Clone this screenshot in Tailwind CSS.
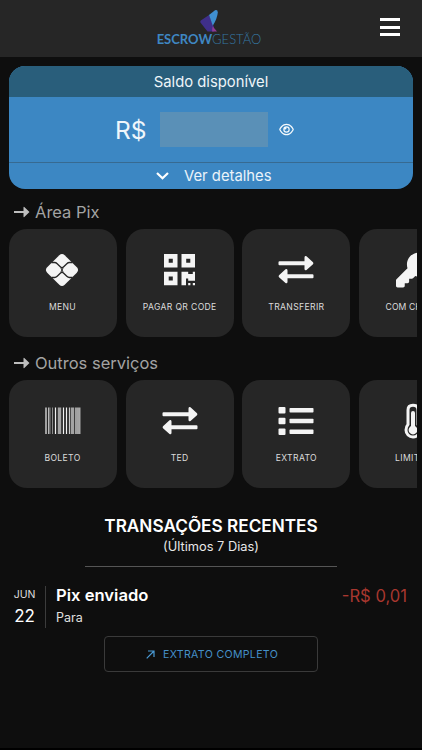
<!DOCTYPE html>
<html lang="pt-BR">
<head>
  <meta charset="UTF-8" />
  <meta name="viewport" content="width=device-width, initial-scale=1" />
  <title>Escrow Gestão</title>
  <script src="https://cdn.jsdelivr.net/npm/@tailwindcss/browser@4"></script>
</head>
<body class="bg-[#0e0e0e] h-[750px] border-b-2 border-black overflow-hidden font-['Inter',sans-serif] text-white">

  <header class="h-[57px] bg-[#262626] grid grid-cols-[1fr_auto_1fr] pr-[22px]">
    <div class="col-start-2 flex flex-col items-center pt-[9px] pl-[18px]">
      <svg class="w-[18px] h-[23px]" viewBox="0 0 18 23">
        <path d="M9 6 0.8 11.5Q-0.3 13 1 14.3L7.5 22.5H14L14 18Z" fill="#3f2f8a" />
        <path d="M9 6 15 1.2Q17.8 0.4 17.8 3.4 17.4 9 12.8 16.8Z" fill="#3f8fd0" />
        <path d="M12.6 17.2 17 22.5H12Z" fill="#8e3a94" />
      </svg>
      <div class="font-['Lato',sans-serif] text-[13px] leading-[17px] -mt-[1px] whitespace-nowrap"><span class="font-bold text-[#3f87c2]">ESCROW</span><span class="font-light text-[#3577a3]">GESTÃO</span></div>
    </div>
    <button class="justify-self-end self-start mt-[18px] w-[20px] h-[18px] flex flex-col justify-between" aria-label="Menu">
      <span class="block w-full h-[3px] bg-white"></span>
      <span class="block w-full h-[3px] bg-white"></span>
      <span class="block w-full h-[3px] bg-white"></span>
    </button>
  </header>

  <main>
    <!-- Saldo -->
    <section class="mt-[9px] mx-[9px] h-[123px] rounded-[16px] overflow-hidden bg-[#3c87c3]">
      <h2 class="h-[31px] pt-[1px] bg-[#295e7b] text-center text-[14.800px] leading-[31px] text-[#eef5f9]">Saldo disponível</h2>
      <div class="h-[65px] flex items-center pl-[106px]">
        <span class="w-[45px] pt-[1px] text-[24.500px] text-[#eff6fb]">R$</span>
        <span class="w-[108px] h-[35px] bg-[#5a90b7]"></span>
        <svg class="ml-[11px] w-[15px] h-[13px]" viewBox="0 0 576 512" fill="#f4f9fc"><path d="M288 80c-65.200 0-118.800 29.600-159.900 67.700C89.600 183.500 63 226 49.400 256c13.600 30 40.200 72.500 78.600 108.300C169.200 402.400 222.800 432 288 432s118.800-29.600 159.900-67.700C486.400 328.500 513 286 526.600 256c-13.600-30-40.200-72.500-78.600-108.300C406.800 109.600 353.200 80 288 80zM95.400 112.600C142.500 68.800 207.200 32 288 32s145.500 36.800 192.600 80.600c46.800 43.500 78.100 95.400 93 131.100 3.300 7.900 3.300 16.700 0 24.600-14.900 35.700-46.200 87.700-93 131.100C433.500 443.200 368.800 480 288 480s-145.500-36.800-192.600-80.600C48.600 356 17.300 304 2.500 268.300c-3.300-7.900-3.300-16.700 0-24.600C17.300 208 48.600 156 95.400 112.600zM288 336c44.200 0 80-35.800 80-80s-35.800-80-80-80c-.7 0-1.300 0-2 0 1.300 5.100 2 10.500 2 16 0 35.300-28.700 64-64 64-5.500 0-10.900-.7-16-2 0 .7 0 1.300 0 2 0 44.200 35.800 80 80 80zm0-208a128 128 0 1 1 0 256 128 128 0 1 1 0-256z" /></svg>
      </div>
      <button class="w-full h-[27px] border-t border-[#376a91] flex items-center pl-[147px] text-[14.800px] text-[#eaf3fa]">
        <svg class="w-[13px] h-[8px] mr-[15px]" viewBox="0 0 13 8" fill="none" stroke="#fff" stroke-width="2.200"><path d="M1 1 6.500 6.300 12 1" /></svg>
        Ver detalhes
      </button>
    </section>

    <!-- Área Pix -->
    <section class="mt-[12px]">
      <h2 class="h-[22px] ml-[14px] flex items-center text-[16.500px] text-[#a3a3a3]">
        <svg class="w-[16px] h-[12px] mr-[5px]" viewBox="0 0 16 12" fill="#bdbdbd"><path d="M0 5H9.500V1.200Q9.700 0.500 10.300 1L15.500 6 10.300 11Q9.700 11.500 9.500 10.800V7H0Z" /></svg>
        Área Pix
      </h2>
      <div class="mt-[6px] ml-[9px] mr-[5px] flex gap-[8.7px] overflow-hidden text-[8.600px] leading-[16px] tracking-[0.35px] text-[#dcdcdc]">
        <div class="shrink-0 size-[108px] rounded-[18px] bg-[#262626] flex flex-col items-center pt-[23px]">
          <svg class="size-[36px] mr-[2px]" viewBox="0 0 36 36">
            <path d="M15.300 3.200Q18 .6 20.700 3.200L32.800 15.300Q35.400 18 32.800 20.700L20.700 32.800Q18 35.400 15.300 32.800L3.200 20.700Q.6 18 3.200 15.300Z" fill="#f4f4f4" />
            <path d="M7.500 10.500H10.500Q12 10.500 13.200 11.700L16.300 14.800Q18 16.500 19.700 14.800L22.800 11.700Q24 10.500 25.500 10.500H28.500M7.500 25.500H10.500Q12 25.500 13.200 24.300L16.300 21.200Q18 19.500 19.700 21.200L22.800 24.300Q24 25.500 25.500 25.500H28.500" fill="none" stroke="#262626" stroke-width="1.300" />
            <path d="M16.800 15.800 19.200 20.200M19.200 15.800 16.800 20.200" stroke="#262626" stroke-width="1" />
          </svg>
          <span class="mt-[11px] mr-[1px]">MENU</span>
        </div>
        <div class="shrink-0 size-[108px] rounded-[18px] bg-[#262626] flex flex-col items-center pt-[23px]">
          <svg class="w-[31px] h-[36px]" viewBox="0 0 31 36" fill="#f4f4f4">
            <path fill-rule="evenodd" d="M0 2H13.500V15.500H0ZM4.700 6.700V10.800H8.800V6.700ZM17.500 2H31V15.500H17.500ZM22.200 6.700V10.800H26.300V6.700ZM0 19.700H13.500V33.200H0ZM4.700 24.400V28.500H8.800V24.400Z" />
            <path d="M17.500 19.700H24.200V22H28.800V19.700H31V28.700H24.200V26.500H22V33.200H17.500ZM24.200 31H26.400V33.200H24.200ZM28.800 31H31V33.200H28.800Z" />
          </svg>
          <span class="mt-[11px]">PAGAR QR CODE</span>
        </div>
        <div class="shrink-0 size-[108px] rounded-[18px] bg-[#262626] flex flex-col items-center pt-[23px]">
          <svg class="size-[36px]" viewBox="0 0 36 36" fill="#f4f4f4">
            <path d="M1.500 9.200H26.500V5.500Q26.700 3.500 28.500 4.300L35 10.200Q35.800 11.200 35 12.200L28.500 18.100Q26.700 18.900 26.500 16.900V13.300H1.500Q.5 13.300.5 12.300V10.200Q.5 9.200 1.500 9.200Z" />
            <path d="M34.500 22.200H9.500V18.500Q9.300 16.500 7.500 17.300L1 23.200Q.2 24.200 1 25.200L7.500 31.100Q9.300 31.900 9.500 29.900V26.300H34.500Q35.500 26.300 35.500 25.300V23.200Q35.500 22.200 34.500 22.200Z" />
          </svg>
          <span class="mt-[11px]">TRANSFERIR</span>
        </div>
        <div class="shrink-0 size-[108px] rounded-[18px] bg-[#262626] flex flex-col items-center pt-[23px]">
          <svg class="w-[35px] h-[36px]" viewBox="0 0 512 512" fill="#f4f4f4"><path fill-rule="evenodd" d="M336 352c97.200 0 176-78.800 176-176S433.200 0 336 0 160 78.800 160 176c0 18.700 2.900 36.800 8.300 53.700L7 391c-4.500 4.500-7 10.600-7 17v80c0 13.300 10.700 24 24 24h80c13.300 0 24-10.700 24-24v-40h40c13.300 0 24-10.700 24-24v-40h40c6.400 0 12.500-2.500 17-7l33.300-33.300c16.900 5.400 35 8.300 53.700 8.300zM376 96a40 40 0 1 1 0 80 40 40 0 1 1 0-80z" /></svg>
          <span class="mt-[11px] mr-[2px] tracking-[0.1px]">COM CHAVE</span>
        </div>
      </div>
    </section>

    <!-- Outros serviços -->
    <section class="mt-[15px]">
      <h2 class="h-[22px] ml-[14px] flex items-center text-[16.500px] text-[#a3a3a3]">
        <svg class="w-[16px] h-[12px] mr-[5px]" viewBox="0 0 16 12" fill="#bdbdbd"><path d="M0 5H9.500V1.200Q9.700 0.500 10.300 1L15.500 6 10.300 11Q9.700 11.500 9.500 10.800V7H0Z" /></svg>
        Outros serviços
      </h2>
      <div class="mt-[6px] ml-[9px] mr-[5px] flex gap-[8.7px] overflow-hidden text-[8.600px] leading-[16px] tracking-[0.35px] text-[#dcdcdc]">
        <div class="shrink-0 size-[108px] rounded-[18px] bg-[#262626] flex flex-col items-center pt-[23px]">
          <svg class="size-[36px]" viewBox="0 0 36 36">
            <path d="M1 4.500V31M10.500 4.500V31M18.500 4.500V31M21.500 4.500V31M31 4.500V31" stroke="#f0f0f0" stroke-width="1.200" />
            <path d="M3.700 4.500V31M34.800 4.500V31M24.500 4.500V31" stroke="#c9c9c9" stroke-width="1.200" />
            <path d="M7.500 4.500V31M5 4.500V31" stroke="#8b8b8b" stroke-width="1" />
            <path d="M14.500 4.500V31M27.500 4.500V31" stroke="#a3a3a3" stroke-width="3.400" />
            <path d="M33 4.500V31" stroke="#a3a3a3" stroke-width="2" />
          </svg>
          <span class="mt-[11px] mr-[1px]">BOLETO</span>
        </div>
        <div class="shrink-0 size-[108px] rounded-[18px] bg-[#262626] flex flex-col items-center pt-[23px]">
          <svg class="size-[36px]" viewBox="0 0 36 36" fill="#f4f4f4">
            <path d="M1.500 9.200H26.500V5.500Q26.700 3.500 28.500 4.300L35 10.200Q35.800 11.200 35 12.200L28.500 18.100Q26.700 18.900 26.500 16.900V13.300H1.500Q.5 13.300.5 12.300V10.200Q.5 9.200 1.500 9.200Z" />
            <path d="M34.500 22.200H9.500V18.500Q9.300 16.500 7.500 17.300L1 23.200Q.2 24.200 1 25.200L7.500 31.100Q9.300 31.900 9.500 29.900V26.300H34.500Q35.500 26.300 35.500 25.300V23.200Q35.500 22.200 34.500 22.200Z" />
          </svg>
          <span class="mt-[11px]">TED</span>
        </div>
        <div class="shrink-0 size-[108px] rounded-[18px] bg-[#262626] flex flex-col items-center pt-[23px]">
          <svg class="size-[36px]" viewBox="0 0 36 36" fill="#f4f4f4">
            <rect x="0.500" y="4" width="7" height="6.500" rx="1" /><rect x="11.500" y="5" width="24" height="4.500" rx="0.800" />
            <rect x="0.500" y="14.800" width="7" height="6.500" rx="1" /><rect x="11.500" y="15.800" width="24" height="4.500" rx="0.800" />
            <rect x="0.500" y="25.600" width="7" height="6.500" rx="1" /><rect x="11.500" y="26.600" width="24" height="4.500" rx="0.800" />
          </svg>
          <span class="mt-[11px]">EXTRATO</span>
        </div>
        <div class="shrink-0 size-[108px] rounded-[18px] bg-[#262626] flex flex-col items-center pt-[23px]">
          <svg class="w-[18px] h-[36px]" viewBox="0 0 18 36">
            <path d="M4 7Q4 2.200 9 2.200T14 7V21.500Q16 23.500 16 27A7 7 0 0 1 2 27Q2 23.500 4 21.500Z" fill="none" stroke="#f4f4f4" stroke-width="3" />
            <path d="M9 10V26" stroke="#f4f4f4" stroke-width="4" stroke-linecap="round" />
            <circle cx="9" cy="27" r="4.400" fill="#f4f4f4" />
          </svg>
          <span class="mt-[11px]">LIMITES</span>
        </div>
      </div>
    </section>

    <!-- Transações -->
    <section class="mt-[27px]">
      <h2 class="text-center text-[17.200px] leading-[22px] font-semibold">TRANSAÇÕES RECENTES</h2>
      <p class="text-center text-[12.800px] leading-[20px] text-[#e8e8e8]">(Últimos 7 Dias)</p>
      <div class="mx-[85px] mt-[9px] h-px bg-[#555]"></div>

      <div class="mt-[19px] h-[42px] flex">
        <div class="w-[46px] pr-[4px] border-r border-[#3c3c3c] flex flex-col items-center pl-[8px]">
          <span class="text-[10.500px] leading-[18px] text-[#dedede]">JUN</span>
          <span class="text-[17px] leading-[24px]">22</span>
        </div>
        <div class="pl-[10px] flex-1">
          <h3 class="-mt-[1px] text-[16.600px] leading-[20px] font-semibold">Pix enviado</h3>
          <p class="mt-[3px] text-[12.500px] leading-[20px] text-[#e0e0e0]">Para</p>
        </div>
        <span class="mr-[15px] text-[16.600px] leading-[20px] text-[#a8372f]">-R$ 0,01</span>
      </div>

      <button class="mt-[8px] ml-[104px] w-[214px] h-[36px] rounded-[4px] border border-[#3a3a3a] flex items-center pl-[41px] pt-[1px] text-[10.600px] tracking-[0.32px] text-[#4590c8] whitespace-nowrap">
        <svg class="w-[9px] h-[9px] mr-[8px]" viewBox="0 0 9 9" fill="none" stroke="#4a9bd6" stroke-width="1.200"><path d="M0.700 8.300 8 1M2 1H8V7" /></svg>
        EXTRATO COMPLETO
      </button>
    </section>
  </main>
</body>
</html>
